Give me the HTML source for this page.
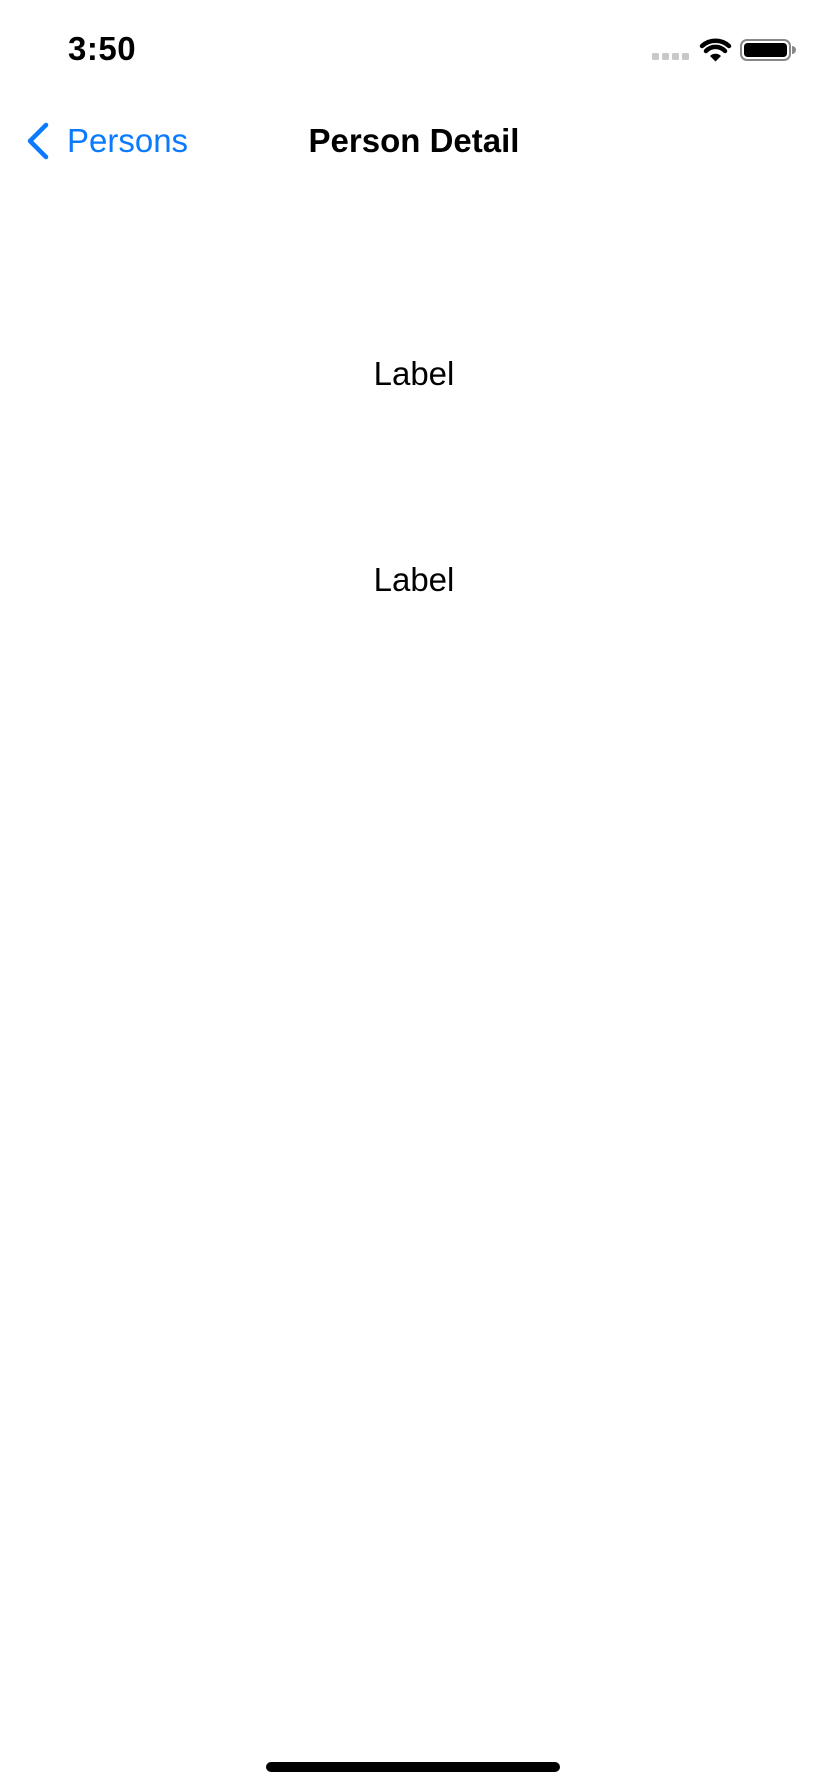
<!DOCTYPE html>
<html><head><meta charset="utf-8"><style>
html,body{margin:0;padding:0;background:#fff;width:828px;height:1792px;overflow:hidden;position:relative;font-family:"Liberation Sans",sans-serif;}
.a{position:absolute;white-space:nowrap;line-height:1;}
</style></head><body>
<div class="a" style="left:68px;top:32px;font-size:33px;font-weight:bold;letter-spacing:0.5px;">3:50</div>
<svg class="a" style="left:650px;top:36px" width="150" height="28" viewBox="0 0 150 28">
<rect x="2" y="17" width="7" height="7" rx="1.5" fill="#c8c8c8"/>
<rect x="12" y="17" width="7" height="7" rx="1.5" fill="#c8c8c8"/>
<rect x="22" y="17" width="7" height="7" rx="1.5" fill="#c8c8c8"/>
<rect x="32" y="17" width="7" height="7" rx="1.5" fill="#c8c8c8"/>
<path d="M52 10 A20 20 0 0 1 79 10" stroke="#000" stroke-width="4.5" fill="none" stroke-linecap="round"/>
<path d="M56 15 A13 13 0 0 1 75 15" stroke="#000" stroke-width="4.5" fill="none" stroke-linecap="round"/>
<path d="M60 20 L65.5 25.5 L71 20 A8 8 0 0 0 60 20Z" fill="#000"/>
<rect x="91" y="4" width="49" height="20" rx="6" fill="none" stroke="#888" stroke-width="2"/>
<rect x="94" y="7" width="43" height="14" rx="3.5" fill="#000"/>
<path d="M142 10 v8 a3 3 0 0 0 0 -8z" fill="#888"/>
</svg>
<svg class="a" style="left:24px;top:122px" width="28" height="38" viewBox="0 0 28 38"><path d="M22 3 L6 19 L22 35" stroke="#0a7aff" stroke-width="4.5" fill="none" stroke-linecap="round" stroke-linejoin="round"/></svg>
<div class="a" style="left:67px;top:124px;font-size:33px;color:#0a7aff;">Persons</div>
<div class="a" style="left:0;width:828px;text-align:center;top:124px;font-size:33px;font-weight:bold;">Person Detail</div>
<div class="a" style="left:0;width:828px;text-align:center;top:357px;font-size:33px;">Label</div>
<div class="a" style="left:0;width:828px;text-align:center;top:563px;font-size:33px;">Label</div>
<div class="a" style="left:266px;top:1762px;width:294px;height:10px;border-radius:5px;background:#000;"></div>
</body></html>
